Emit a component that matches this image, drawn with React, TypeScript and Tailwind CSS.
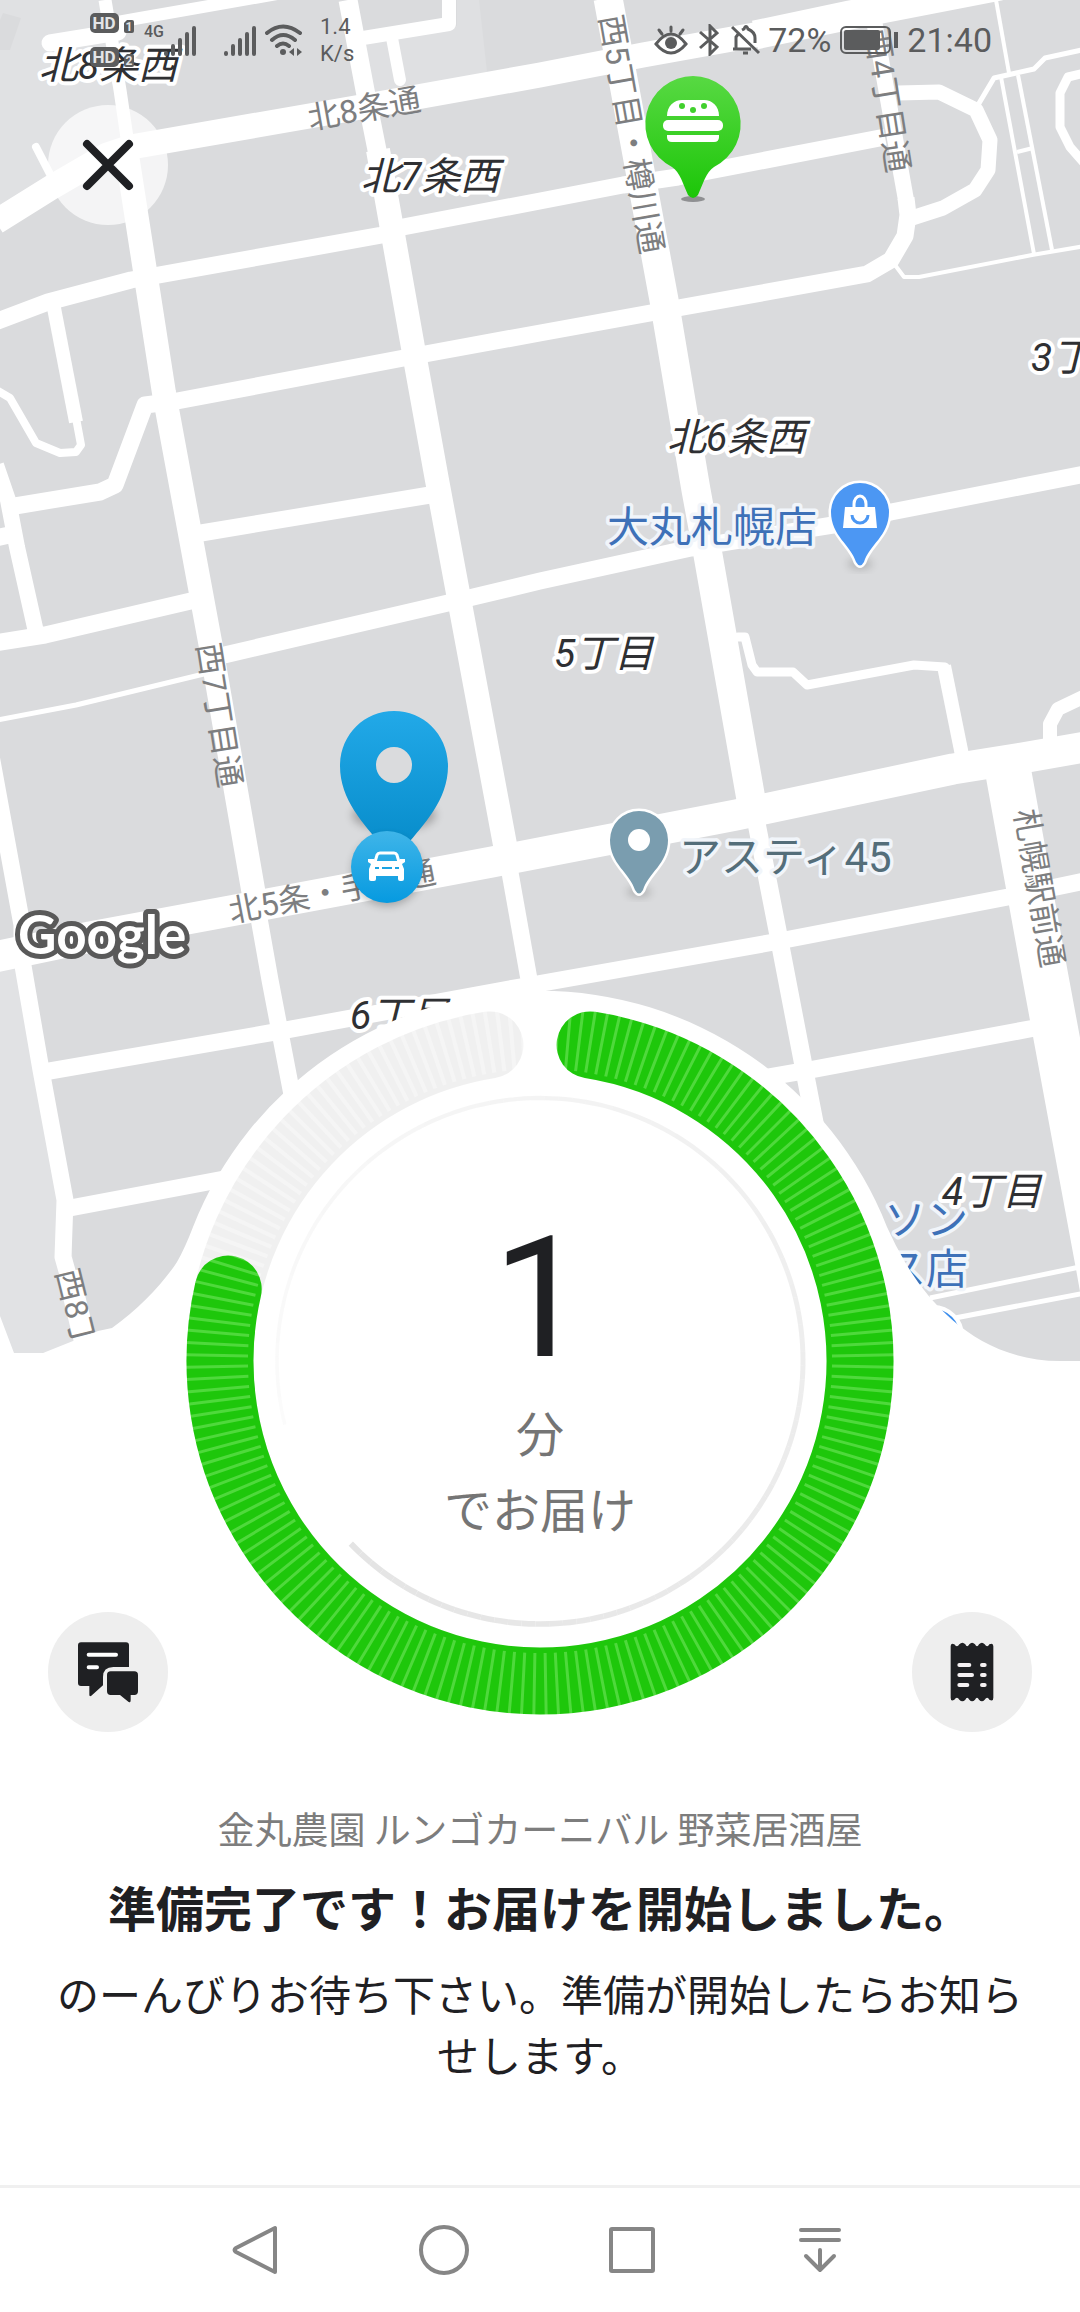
import React from "react";

const MAP_FONT = '"Roboto", "Noto Sans CJK JP", sans-serif';

type Road = { d: string; w: number; cap?: "round" | "butt" };

const roads: Road[] = [
  // north-south streets
  { d: "M105 0L120 90L131 165", w: 13 },
  { d: "M127 155L164 393L211 647L254 895", w: 24 },
  { d: "M254 890L270 980L293 1100", w: 17 },
  { d: "M348 0L365 90L380 165", w: 19 },
  { d: "M378 150L414 353L437 480L458 593L506 850", w: 24 },
  { d: "M506 850L530 985", w: 17 },
  { d: "M608 -2L664 300L696 490L708 555L752 805", w: 29 },
  { d: "M752 800L778 933L803 1063L815 1125", w: 18 },
  { d: "M873 15L906 200", w: 16 },
  { d: "M906 198L908 215L905 236L891 260L867 274L678 308L540 333L425 354L177 401L145 405L115 485L100 492L15 506", w: 17 },
  { d: "M1007 765L1045 975L1099 1267L1112 1340", w: 46 },
  { d: "M-10 750L22 925L22 960L41 1070L65 1200L63 1257L69 1278", w: 17 },
  { d: "M68 1272L86 1345", w: 22 },
  { d: "M-4 465L8 500L17 547L36 632", w: 16 },
  { d: "M54 308L76 422", w: 14 },
  { d: "M76 418L81 445L76 452L60 453L36 443L21 417L10 398L-2 391", w: 8 },
  { d: "M36 147L52 178", w: 8, cap: "round" },
  // east-west streets
  { d: "M-4 222L52 187L107 155L131 147L361 107L540 75L643 55L760 34", w: 25 },
  { d: "M755 35L850 15L1000 -14", w: 29 },
  { d: "M50 43L118 32", w: 17, cap: "round" },
  { d: "M112 23L140 18L300 -10", w: 12 },
  { d: "M449 -5L449 24L363 38", w: 14 },
  { d: "M392 38L400 80", w: 12, cap: "round" },
  { d: "M-5 322L48 302L131 280L382 235L403 227L540 201L623 185L678 177L885 137", w: 17 },
  { d: "M195 534L430 495", w: 17 },
  { d: "M-5 643L45 635L195 600", w: 17 },
  { d: "M-5 538L14 534", w: 17 },
  { d: "M220 656L448 603L540 581L691 548L833 525L891 512L1085 474", w: 17 },
  { d: "M-3 720L76 705L212 672", w: 5 },
  { d: "M-5 957L90 937L241 909L492 862L736 815L953 769L1022 758L1085 747", w: 31 },
  { d: "M38 1073L275 1032L520 987L774 942L1008 897L1085 881", w: 17 },
  { d: "M70 1208L240 1176", w: 17 },
  { d: "M740 1082L815 1069L1040 1027", w: 17 },
  { d: "M930 1298L1080 1267", w: 5 },
  { d: "M955 1318L1085 1293", w: 5 },
  // lanes and loops
  { d: "M738 637L745 637L752 665L757 672L793 672L807 685L914 665L945 667", w: 9, cap: "round" },
  { d: "M944 666L963 760", w: 14 },
  { d: "M1050 750L1050 724L1058 709L1085 696", w: 14 },
  { d: "M898 93L939 92L976 110L990 140L988 170L975 190L943 208L912 218", w: 15 },
  { d: "M996 0L1009 73", w: 4 },
  { d: "M978 105L994 78L1034 69L1045 58L1082 50", w: 5 },
  { d: "M1001 77L1034 254", w: 4 },
  { d: "M1018 75L1052 250", w: 4 },
  { d: "M1017 152L1033 148", w: 4 },
  { d: "M895 265L904 277L919 277L1032 255L1085 246", w: 4 },
  { d: "M1085 73L1068 77L1060 93L1060 127L1070 147L1085 164", w: 9 },
];

type Street = { t: string; x: number; y: number; a: number };

const streets: Street[] = [
  { t: "北8条通", x: 364, y: 108, a: -10 },
  { t: "西5丁目・樽川通", x: 632, y: 134, a: 80 },
  { t: "西4丁目通", x: 888, y: 100, a: 81 },
  { t: "西7丁目通", x: 220, y: 715, a: 81 },
  { t: "札幌駅前通", x: 1040, y: 888, a: 80 },
  { t: "西8丁", x: 77, y: 1309, a: 76 },
  { t: "北5条・手稲通", x: 332, y: 891, a: -11 },
];

type District = { t: string; x: number; y: number };

const districts: District[] = [
  { t: "北8条西", x: 39, y: 79 },
  { t: "北7条西", x: 361, y: 190 },
  { t: "北6条西", x: 667, y: 451 },
  { t: "3丁目", x: 1031, y: 371 },
  { t: "5丁目", x: 554, y: 667 },
  { t: "6丁目", x: 350, y: 1029 },
  { t: "4丁目", x: 942, y: 1205 },
];

function PlaceLabel({ x, y, color, children }: { x: number; y: number; color: string; children: string }) {
  return (
    <text x={x} y={y} fontSize={42} fill={color} stroke="#f1f5fa" strokeWidth={7} strokeLinejoin="round" paintOrder="stroke">
      {children}
    </text>
  );
}

const PIN = "M0-29A29 29 0 0 0-29 0C-29 24-9 33-4 50Q0 57 4 50C9 33 29 24 29 0A29 29 0 0 0 0-29Z";

function CityMap() {
  return (
    <svg
      viewBox="0 0 1080 1361"
      preserveAspectRatio="xMidYMin slice"
      className="col-start-1 row-start-1 h-[1361px] w-full"
      fontFamily={MAP_FONT}
      role="img"
      aria-label="配達状況の地図"
    >
      <defs>
        <linearGradient id="green" x1="0" y1="0" x2="0" y2="1">
          <stop offset="0" stopColor="#58d943" />
          <stop offset="1" stopColor="#1cc608" />
        </linearGradient>
        <linearGradient id="blue" x1="0" y1="0" x2="0" y2="1">
          <stop offset="0" stopColor="#22a9e8" />
          <stop offset="1" stopColor="#068bc9" />
        </linearGradient>
        <linearGradient id="car" x1="0" y1="0" x2="0" y2="1">
          <stop offset="0" stopColor="#3fb5e9" />
          <stop offset="1" stopColor="#069ae0" />
        </linearGradient>
        <filter id="soft" x="-50%" y="-50%" width="200%" height="200%">
          <feGaussianBlur stdDeviation="4" />
        </filter>
      </defs>

      <rect width="1080" height="1361" fill="#dadbdd" />
      <path d="M0 0H105L128 150L0 218Z" fill="#e0e1e3" />
      <path d="M3 13L21 18L10 50L0 50V20Z" fill="#dadbdd" />
      <path d="M363 38L457 26V0H479L487 72L368 95Z" fill="#dfe0e2" />
      <path d="M0 955H22L65 1200L84 1345L0 1361Z" fill="#e1e2e4" />
      {roads.map((r) => (
        <path key={r.d} d={r.d} stroke="#fff" strokeWidth={r.w} fill="none" strokeLinejoin="round" strokeLinecap={r.cap ?? "butt"} />
      ))}

      {streets.map((s) => (
        <text key={s.t} transform={`translate(${s.x} ${s.y}) rotate(${s.a})`} dy={12} textAnchor="middle" fontSize={32} fill="#7d7e80">
          {s.t}
        </text>
      ))}

      <PlaceLabel x={607} y={542} color="#3e71b8">大丸札幌店</PlaceLabel>
      <PlaceLabel x={679} y={872} color="#546e7a">アスティ45</PlaceLabel>
      <PlaceLabel x={884} y={1235} color="#3e71b8">ソン</PlaceLabel>
      <PlaceLabel x={884} y={1284} color="#3e71b8">ス店</PlaceLabel>

      {districts.map((d) => (
        <text
          key={d.t}
          x={d.x}
          y={d.y}
          fontSize={39}
          fontStyle="italic"
          fill="#2f3033"
          stroke="#fff"
          strokeWidth={8}
          strokeLinejoin="round"
          paintOrder="stroke"
        >
          {d.t}
        </text>
      ))}

      {/* shop pins */}
      <g transform="translate(860 512)">
        <ellipse cx="0" cy="52" rx="12" ry="5" fill="#000" opacity="0.2" filter="url(#soft)" />
        <path d={PIN} fill="#4c97f3" stroke="#fff" strokeWidth="5" paintOrder="stroke" />
        <path d="M-15-5H15L17 16H-17Z" fill="#fff" />
        <path d="M-6-4V-8A6 8 0 0 1 6-8V-4" stroke="#fff" strokeWidth="3" fill="none" />
        <path d="M-8 3A8 8 0 0 0 8 3" stroke="#4c97f3" strokeWidth="3" fill="none" />
      </g>
      <g transform="translate(639 840)">
        <ellipse cx="0" cy="52" rx="12" ry="5" fill="#000" opacity="0.2" filter="url(#soft)" />
        <path d={PIN} fill="#7a9daf" stroke="#fff" strokeWidth="5" paintOrder="stroke" />
        <circle r="11" fill="#fff" />
      </g>
      <circle cx="933" cy="1336" r="29" fill="#3b8ded" stroke="#fff" strokeWidth="4" />

      {/* restaurant pin */}
      <ellipse cx="693" cy="199" rx="12" ry="3" fill="#8f9092" />
      <path d="M693 76A48 48 0 0 0 672 167C680 172 683 184 688 195Q693 201 698 195C703 184 706 172 714 167A48 48 0 0 0 693 76Z" fill="url(#green)" />
      <path d="M667 116C667 106 674 100 682 100H704C712 100 719 106 719 116Z" fill="#fff" />
      <rect x="663" y="120" width="60" height="11" rx="5" fill="#fff" />
      <path d="M667 135H719V137Q719 142 714 142H672Q667 142 667 137Z" fill="#fff" />
      <g fill="#41d02d">
        <circle cx="682" cy="106" r="3" />
        <circle cx="693" cy="110" r="3" />
        <circle cx="704" cy="106" r="3" />
      </g>

      {/* destination pin and courier */}
      <ellipse cx="394" cy="815" rx="42" ry="16" fill="#000" opacity="0.25" filter="url(#soft)" />
      <path
        d="M394 711C364 711 340 735 340 766C340 800 364 824 382 846Q394 860 406 846C424 824 448 800 448 766C448 735 424 711 394 711ZM394 747A18 18 0 1 1 394 783A18 18 0 1 1 394 747Z"
        fill="url(#blue)"
        fillRule="evenodd"
      />
      <circle cx="387" cy="871" r="35" fill="#000" opacity="0.25" filter="url(#soft)" />
      <circle cx="387" cy="867" r="36" fill="url(#car)" />
      <path d="M375 862L377 855Q378 853 380 853H394Q396 853 397 855L399 862" stroke="#fff" strokeWidth="3" fill="none" />
      <path
        d="M368 859H374V861H400V859H405V862L402 864L404 869V879Q404 881 402 881H400Q398 881 398 879V876H376V879Q376 881 374 881H371Q369 881 369 879V869L371 864L368 862Z"
        fill="#fff"
      />
      <path d="M375 868H379M382 868H392M395 868H399" stroke="#1ba3e3" strokeWidth="2" />

      <text
        x="18"
        y="954"
        fontSize="53"
        fontFamily='"Lato", sans-serif'
        fontWeight="700"
        fill="#fff"
        stroke="#595959"
        strokeWidth="10"
        strokeLinejoin="round"
        paintOrder="stroke"
      >
        Google
      </text>

      {/* panel edge that rises around the countdown dial */}
      <path
        d="M0 1361V1316L14 1353H43L98 1331L112 1328C140 1308 164 1282 177 1262Q185 1248 193 1227A373 373 0 0 1 887 1227Q895 1245 905 1262C930 1305 980 1361 1060 1361Z"
        fill="#fff"
      />
    </svg>
  );
}

function HdMark({ sim }: { sim: string }) {
  return (
    <svg width="44" height="20" viewBox="0 0 44 20" fontFamily="Roboto, sans-serif" fontWeight="700" aria-hidden="true">
      <rect width="29" height="20" rx="5" fill="#5b5c5d" />
      <text x="14" y="16" fontSize="17" textAnchor="middle" fill="#e4e5e6">
        HD
      </text>
      <path d="M34 10L37 7H42Q44 7 44 9V18Q44 20 42 20H36Q34 20 34 18Z" fill="#5b5c5d" />
      <text x="39" y="18" fontSize="12" textAnchor="middle" fill="#e4e5e6">
        {sim}
      </text>
    </svg>
  );
}

function Signal() {
  return (
    <svg width="32" height="31" viewBox="0 0 32 31" className="shrink-0" aria-hidden="true">
      <path d="M2 28V29M9 21V29M16 15V29M23 9V29M30 3V29" stroke="#5b5c5d" strokeWidth="4" strokeLinecap="round" />
    </svg>
  );
}

function StatusBar() {
  return (
    <header className="flex h-20 items-center justify-between pr-[88px] pl-[90px] font-[Roboto,sans-serif] text-[#5b5c5d]">
      <div className="flex items-center">
        <div className="flex flex-col gap-[14px]">
          <HdMark sim="1" />
          <HdMark sim="2" />
        </div>
        <span className="ml-[10px] self-start pt-1 text-[16px] leading-[30px] font-medium">4G</span>
        <Signal />
        <span className="w-[28px]" />
        <Signal />
        <svg width="37" height="32" viewBox="0 0 37 32" className="ml-[9px]" fill="none" stroke="#5b5c5d" strokeWidth="4" strokeLinecap="round" aria-hidden="true">
          <path d="M2 9Q18-4 35 9M7 16Q18 6 30 16M12 22Q18 17 24 22" />
          <circle cx="18" cy="28" r="3" fill="#5b5c5d" stroke="none" />
          <path d="M29 24V32L24 28ZM32 24V32L37 28Z" fill="#5b5c5d" stroke="none" />
        </svg>
        <p className="ml-[18px] text-[22px] leading-[27px]">
          1.4
          <br />
          K/s
        </p>
      </div>
      <div className="flex items-center text-[34px] leading-10">
        <svg width="34" height="32" viewBox="0 0 34 32" fill="none" stroke="#5b5c5d" strokeWidth="3" strokeLinecap="round" aria-hidden="true">
          <path d="M2 20Q17 0 32 20Q17 38 2 20ZM17 3V7M5 6L8 10M29 6L26 10" />
          <circle cx="17" cy="19" r="6" fill="#5b5c5d" stroke="none" />
        </svg>
        <svg width="20" height="32" viewBox="0 0 20 32" className="ml-[11px]" fill="none" stroke="#5b5c5d" strokeWidth="3" aria-hidden="true">
          <path d="M1 8L18 23L11 30V2L18 9L1 24" />
        </svg>
        <svg width="30" height="32" viewBox="0 0 30 32" className="ml-3" fill="none" stroke="#5b5c5d" strokeWidth="3" aria-hidden="true">
          <path d="M1 3L28 29M2 25H20M5 25V13L8 9M11 6L13 5Q15 0 17 5Q24 8 24 14V19M12 29H17" />
        </svg>
        <span className="ml-[7px]">72%</span>
        <svg width="58" height="28" viewBox="0 0 58 28" className="ml-[9px]" aria-hidden="true">
          <rect x="1" y="1" width="49" height="26" rx="5" fill="none" stroke="#5b5c5d" strokeWidth="2" />
          <rect x="4" y="4" width="36" height="20" rx="2" fill="#5b5c5d" />
          <rect x="54" y="6" width="4" height="16" fill="#5b5c5d" />
        </svg>
        <time className="ml-[9px]">21:40</time>
      </div>
    </header>
  );
}

const polar = (r: number, deg: number) => {
  const a = (deg * Math.PI) / 180;
  return `${(354 + r * Math.sin(a)).toFixed(2)} ${(354 - r * Math.cos(a)).toFixed(2)}`;
};

const arc = (r: number, from: number, to: number) =>
  `M${polar(r, from)}A${r} ${r} 0 ${to - from > 180 ? 1 : 0} 1 ${polar(r, to)}`;

const spokes = Array.from({ length: 180 }, (_, i) => `M${polar(292, i * 2 + 1)}L${polar(355, i * 2 + 1)}`).join("");

const sweep = Array.from({ length: 110 }, (_, i) => ({ from: -104 + i * 3, o: 0.15 + (0.85 * (i + 1)) / 110 }));

function Dial() {
  return (
    <div className="mb-[17px] grid w-[708px]">
      <svg viewBox="0 0 708 708" className="col-start-1 row-start-1 w-full" role="img" aria-label="お届けまでの進み具合">
        <defs>
          <mask id="rest">
            <path d={arc(320, 200, 351)} stroke="#fff" strokeWidth="67" strokeLinecap="round" fill="none" />
          </mask>
          <mask id="done">
            <path d={arc(320, 9, 283)} stroke="#fff" strokeWidth="67" strokeLinecap="round" fill="none" />
          </mask>
        </defs>
        <g mask="url(#rest)">
          <rect width="708" height="708" fill="#f0f0f0" />
          <path d={spokes} stroke="#f5f5f5" strokeWidth="4" />
        </g>
        <g mask="url(#done)">
          <rect width="708" height="708" fill="#1ec70b" />
          <path d={spokes} stroke="#4fd93c" strokeWidth="3" />
        </g>
        {sweep.map((s) => (
          <path key={s.from} d={arc(263, s.from, s.from + 3)} stroke="#e4e4e4" strokeOpacity={s.o} strokeWidth={3 + s.o * 3} fill="none" />
        ))}
      </svg>
      <div className="col-start-1 row-start-1 flex flex-col items-center pt-[208px] text-[48px] leading-[76px] text-[#757575]">
        <strong className="font-[Roboto,sans-serif] text-[168px] leading-[168px] font-normal text-[#1f2023]">1</strong>
        <span className="mt-2.5">分</span>
        <span>でお届け</span>
      </div>
    </div>
  );
}

function RoundButton({ label, box, children }: { label: string; box: string; children: React.ReactNode }) {
  return (
    <button type="button" aria-label={label} className="size-[120px] shrink-0 rounded-full bg-[#eeeeee]">
      <svg viewBox={box} className="size-full" fill="#1f2023">
        {children}
      </svg>
    </button>
  );
}

function NavButton({ label, children }: { label: string; children: React.ReactNode }) {
  return (
    <button type="button" aria-label={label} className="flex flex-1 items-center justify-center">
      <svg width="52" height="52" viewBox="0 0 52 52" fill="none" stroke="#868686" strokeWidth="4" strokeLinecap="round" strokeLinejoin="round">
        {children}
      </svg>
    </button>
  );
}

export default function App() {
  return (
    <main className="flex min-h-screen flex-col overflow-x-hidden bg-white font-['Noto_Sans_CJK_JP',sans-serif]" lang="ja">
      <section className="grid grid-cols-1">
        <CityMap />
        <div className="relative col-start-1 row-start-1 flex flex-col">
          <StatusBar />
          <button
            type="button"
            aria-label="閉じる"
            className="mt-[25px] ml-12 flex size-[120px] items-center justify-center rounded-full bg-white/70"
          >
            <svg width="52" height="52" viewBox="0 0 52 52" stroke="#1f2023" strokeWidth="8" strokeLinecap="round">
              <path d="M5 5L47 47M47 5L5 47" />
            </svg>
          </button>
          <div className="mt-[782px] flex items-end justify-between px-12">
            <RoundButton label="メッセージ" box="144 155 360 360">
              <path d="M243 246H378Q387 246 387 255V320H340Q309 320 309 350V375L274 406Q268 410 268 403V377H243Q234 377 234 368V255Q234 246 243 246Z" />
              <path d="M332 333H403Q414 333 414 344V393Q414 404 403 404H392V420Q392 429 385 424L360 404H332Q321 404 321 393V344Q321 333 332 333Z" />
              <path d="M266 283H348M266 321H291" stroke="#fff" strokeWidth="12" strokeLinecap="round" />
            </RoundButton>
            <Dial />
            <RoundButton label="領収書" box="156 155 360 360">
              <path d="M272 258Q272 246 283 252Q291 264 298 252Q307 242 316 252Q321 264 328 252Q336 242 345 252Q351 264 357 252Q366 242 374 252Q382 264 388 252Q400 246 400 258V412Q400 425 388 418Q382 406 374 418Q366 428 357 418Q351 406 345 418Q336 428 328 418Q321 406 316 418Q307 428 298 418Q291 406 283 418Q272 425 272 412Z" />
              <path
                d="M298 314H328M298 344H336M298 374H322M366 314H374M366 344H374M366 374H374"
                stroke="#f4f0f2"
                strokeWidth="12"
                strokeLinecap="round"
              />
            </RoundButton>
          </div>
        </div>
      </section>

      <section className="px-12 pt-[66px] pb-24 text-center text-[#1f2023]">
        <p className="text-[37px] leading-[60px] text-[#7d7d7d]">金丸農園 ルンゴカーニバル 野菜居酒屋</p>
        <h1 className="mt-2 text-[48px] leading-[80px] font-bold">準備完了です！お届けを開始しました。</h1>
        <p className="mt-4 text-[42px] leading-[61px]">のーんびりお待ち下さい。準備が開始したらお知らせします。</p>
      </section>

      <nav className="mt-auto flex h-[127px] border-t-[3px] border-[#f0f0f0] pr-[166px] pl-[162px]">
        <NavButton label="戻る">
          <path d="M45 4V48L6 28Q3 26 6 24Z" />
        </NavButton>
        <NavButton label="ホーム">
          <circle cx="26" cy="26" r="23" />
        </NavButton>
        <NavButton label="最近使ったアプリ">
          <rect x="5" y="5" width="42" height="42" rx="1" />
        </NavButton>
        <NavButton label="通知パネル">
          <path d="M7 6H45M7 16H45M26 26V46M12 32L26 46L40 32" />
        </NavButton>
      </nav>
    </main>
  );
}
